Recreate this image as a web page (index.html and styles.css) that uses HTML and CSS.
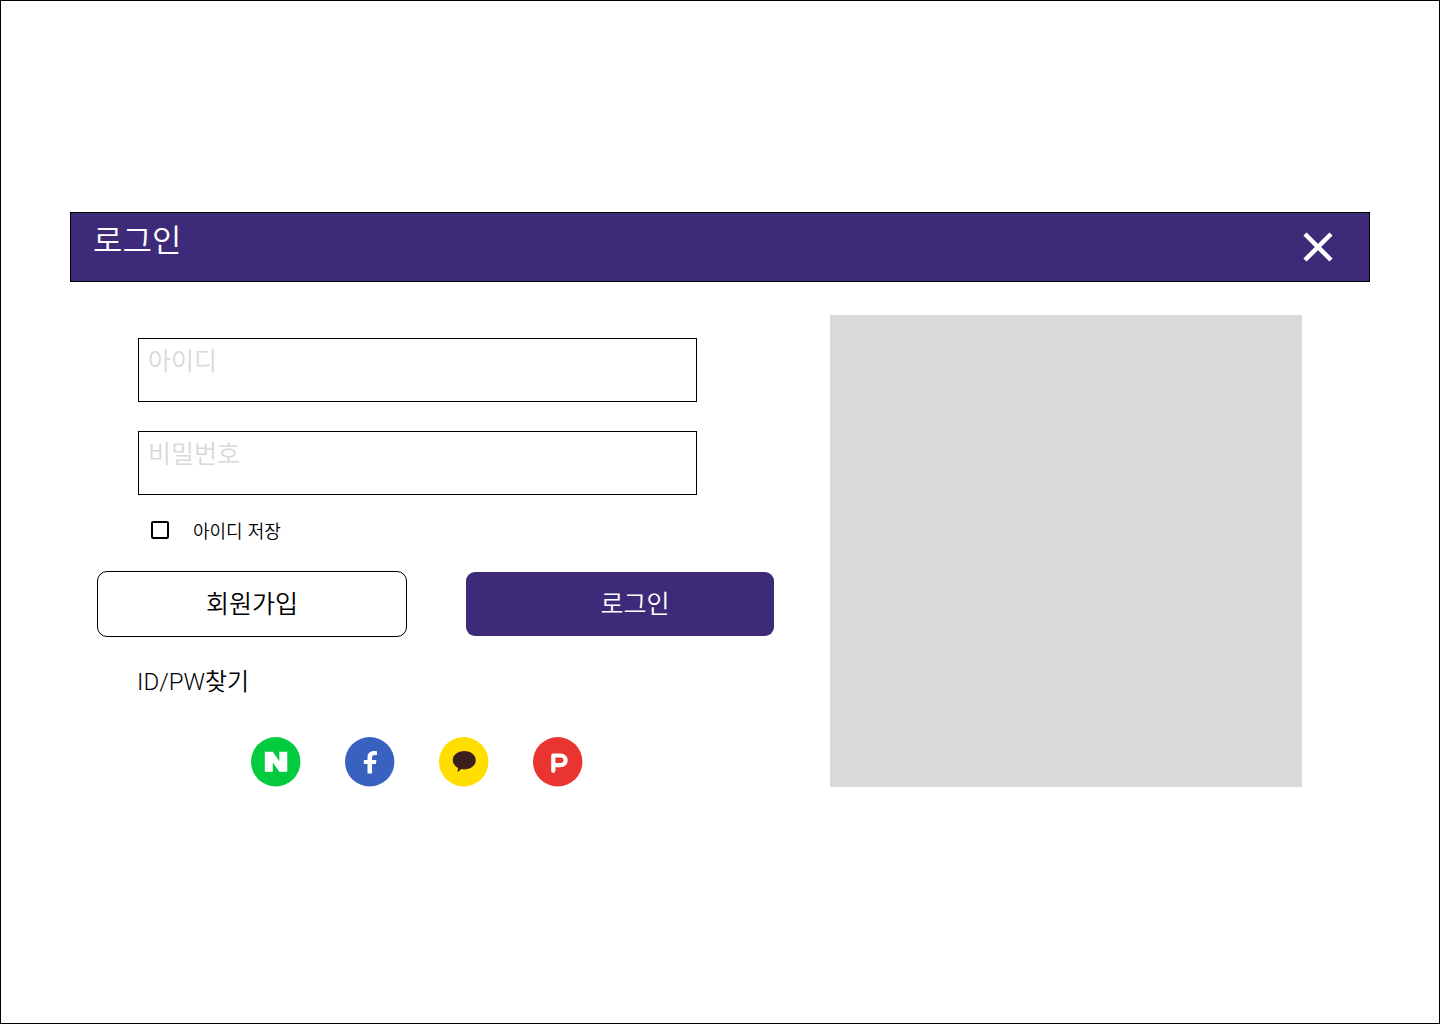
FILE: index.html
```html
<!DOCTYPE html>
<html lang="ko">
<head>
<meta charset="utf-8">
<meta name="viewport" content="width=device-width, initial-scale=1">
<title>로그인</title>
<link rel="stylesheet" href="styles.css">
</head>
<body>
<main class="page">
  <section class="login">
    <header class="login-header">
      <h1 class="login-title">로그인</h1>
      <button class="close" type="button" aria-label="닫기">
        <svg width="30" height="30" viewBox="0 0 30 30" aria-hidden="true"><path d="M2 2 28 28M28 2 2 28" stroke="currentColor" stroke-width="4.500"/></svg>
      </button>
    </header>
    <div class="login-body">
      <form class="form">
        <div class="fields">
          <input class="field" type="text" placeholder="아이디" aria-label="아이디">
          <input class="field" type="password" placeholder="비밀번호" aria-label="비밀번호">
          <label class="remember"><input class="check" type="checkbox">아이디 저장</label>
        </div>
        <div class="actions">
          <button class="button button-outline" type="button">회원가입</button>
          <button class="button button-solid" type="submit">로그인</button>
        </div>
        <a class="find" href="#"><span class="find-latin">ID/PW</span>찾기</a>
        <nav class="social" aria-label="간편 로그인">
          <a class="social-link" href="#" aria-label="네이버">
            <svg viewBox="0 0 50 50"><circle cx="24.700" cy="24.700" r="24.700" fill="#03cb3e"/><path d="M13.800 14.800h8l6.500 9.500v-9.500h8v20h-8L21.800 25.500v9.300h-8z" fill="#fff"/></svg>
          </a>
          <a class="social-link" href="#" aria-label="페이스북">
            <svg viewBox="0 0 50 50"><circle cx="24.700" cy="24.700" r="24.700" fill="#3962c0"/><path d="M22.500 36.600V27H18.800v-4h3.700V20.500c0-4.300 2.600-6.500 6.500-6.500 1.200 0 2.200.1 3 .3v3.600h-2.300c-2 0-2.700 1-2.700 2.600V23h4.400l-.5 4H27v9.600z" fill="#fff"/></svg>
          </a>
          <a class="social-link" href="#" aria-label="카카오">
            <svg viewBox="0 0 50 50"><circle cx="24.700" cy="24.700" r="24.700" fill="#ffde00"/><path d="M25.300 14c6.400 0 11.500 4.100 11.500 9.200s-5.100 9.200-11.500 9.200c-1 0-2-.1-2.900-.3-1 1-2.300 2.200-4.100 3 .6-1.500.8-3 .6-4.300C15.800 29.100 13.800 26.400 13.800 23.200 13.800 18.100 18.900 14 25.300 14z" fill="#3b1e1e"/></svg>
          </a>
          <a class="social-link" href="#" aria-label="페이코">
            <svg viewBox="0 0 50 50"><circle cx="24.700" cy="24.700" r="24.700" fill="#e93430"/><path d="M20.300 33.800V18.500h7.500a4.800 4.800 0 0 1 0 9.600h-7" fill="none" stroke="#fff" stroke-width="4.200" stroke-linecap="round" stroke-linejoin="round"/></svg>
          </a>
        </nav>
      </form>
      <div class="picture"></div>
    </div>
  </section>
</main>
</body>
</html>
```
FILE: styles.css
```css
*,
*::before,
*::after {
  box-sizing: border-box;
}

body {
  margin: 0;
  background: #fff;
  color: #000;
  font-family: "Noto Sans CJK KR DemiLight", "Noto Sans CJK KR", sans-serif;
  font-weight: 350;
}

button,
input {
  font: inherit;
  color: inherit;
}

.page {
  min-height: 100vh;
  padding: 211px 69px 0;
  border: 1px solid #000;
}

.login-header {
  display: flex;
  justify-content: space-between;
  align-items: center;
  height: 70px;
  padding: 0 36px 0 22px;
  border: 1px solid #000;
  background: #3d2a78;
  color: #fff;
}

.login-title {
  margin: 0;
  padding-bottom: 18px;
  font-size: 32px;
  line-height: 40px;
  font-weight: inherit;
}

.close {
  display: flex;
  padding: 0;
  border: 0;
  background: none;
}

.login-body {
  display: grid;
  grid-template-columns: 1fr 472px;
  gap: 56px;
  padding: 33px 68px 0 28px;
}

.form {
  padding-top: 23px;
}

.fields {
  display: flex;
  flex-direction: column;
  margin: 0 77px 0 40px;
}

.field {
  width: 100%;
  height: 64px;
  margin-bottom: 29px;
  padding: 0 9px 22px;
  border: 1px solid #000;
  border-radius: 0;
  background: #fff;
  font-size: 25px;
}

.field::placeholder {
  color: #d9d9d9;
  opacity: 1;
}

.remember {
  display: flex;
  align-items: center;
  gap: 24px;
  align-self: flex-start;
  margin: -6px 0 30px;
  padding-left: 13px;
  font-size: 18px;
  line-height: 24px;
}

.check {
  appearance: none;
  width: 18px;
  height: 18px;
  margin: 0;
  border: 2px solid #000;
  border-radius: 2px;
}

.actions {
  display: grid;
  grid-template-columns: 1fr 1fr;
  gap: 60px;
}

.button {
  height: 64px;
  padding: 0 0 4px;
  border: 0;
  border-radius: 9px;
  font-size: 25px;
}

.button-outline {
  background: #fff;
  outline: 1px solid #000;
}

.button-solid {
  padding-left: 30px;
  background: #3d2a78;
  color: #fff;
}

.find {
  display: block;
  width: fit-content;
  margin: 28px 0 0 39px;
  color: inherit;
  font-size: 24px;
  line-height: 32px;
  text-decoration: none;
}

.find-latin {
  font-family: Roboto, sans-serif;
  font-weight: 300;
}

.social {
  display: flex;
  gap: 44px;
  margin: 39px 0 0 153px;
}

.social-link,
.social-link svg {
  display: block;
  width: 50px;
  height: 50px;
}

.picture {
  height: 472px;
  background: #d9d9d9;
}
```
